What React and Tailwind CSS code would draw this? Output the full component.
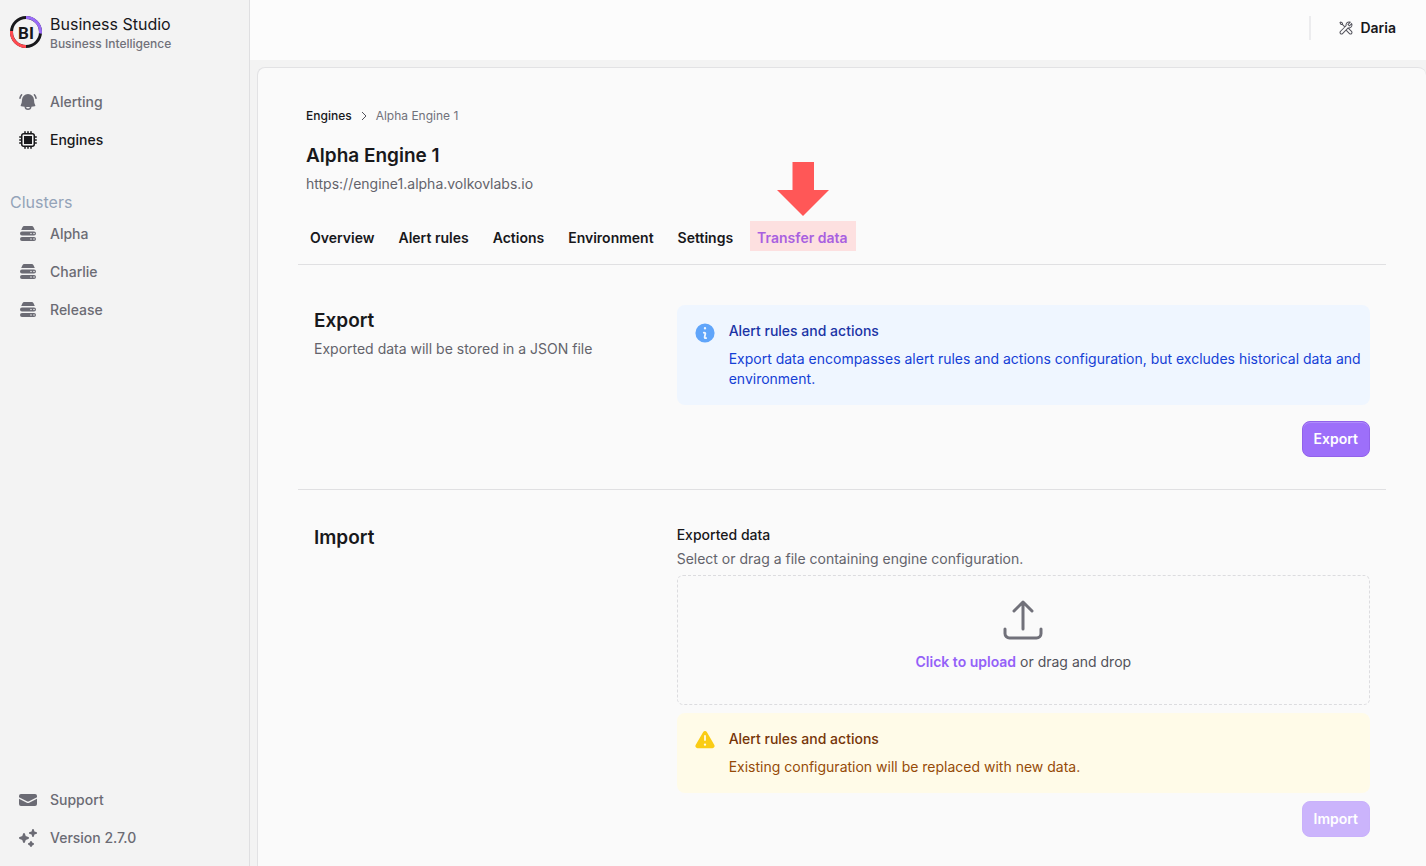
import { useState } from "react";
import {
  HiMiniBellAlert,
  HiMiniCpuChip,
  HiMiniServerStack,
  HiMiniEnvelope,
  HiMiniSparkles,
  HiMiniInformationCircle,
  HiMiniExclamationTriangle,
  HiOutlineArrowUpTray,
} from "react-icons/hi2";
import { LiaToolsSolid } from "react-icons/lia";

function Logo() {
  return (
    <svg viewBox="0 0 32 32" className="mt-0.5 size-8 shrink-0" fill="none" strokeWidth="3" aria-hidden="true">
      <circle cx="16" cy="16" r="14.5" stroke="#18181b" />
      <path d="M16 1.5A14.5 14.5 0 0 1 30.4 17.5" stroke="#9a6cf8" />
      <path d="M16 30.5A14.5 14.5 0 0 1 1.5 15" stroke="#ff4a50" />
      <text
        x="16"
        y="23"
        textAnchor="middle"
        fill="#18181b"
        fontSize="17"
        fontWeight="700"
        fontFamily="Roboto, sans-serif"
      >
        BI
      </text>
    </svg>
  );
}

function NavItem({ icon: Icon, label, active }) {
  return (
    <li>
      <a
        href="#"
        className={
          "flex h-9 items-center gap-3 px-2 text-sm font-medium " + (active ? "text-[#18181b]" : "text-[#6b6b74]")
        }
      >
        <Icon className="size-5 shrink-0" />
        {label}
      </a>
    </li>
  );
}

function Sidebar() {
  return (
    <aside className="flex w-[250px] shrink-0 flex-col border-r border-[#dfdfe1] bg-[#f3f3f3] p-2.5">
      <a href="#" className="flex items-start gap-2 pt-1">
        <Logo />
        <span className="flex flex-col">
          <span className="text-base leading-5 text-[#18181b]">Business Studio</span>
          <span className="text-xs leading-5 font-medium text-[#71717a]">Business Intelligence</span>
        </span>
      </a>
      <nav className="flex grow flex-col pt-[30px]">
        <ul className="flex flex-col gap-0.5">
          <NavItem icon={HiMiniBellAlert} label="Alerting" />
          <NavItem icon={HiMiniCpuChip} label="Engines" active />
        </ul>
        <h2 className="mt-8 mb-0.5 text-base text-[#94a3b8]">Clusters</h2>
        <ul className="flex flex-col gap-0.5">
          <NavItem icon={HiMiniServerStack} label="Alpha" />
          <NavItem icon={HiMiniServerStack} label="Charlie" />
          <NavItem icon={HiMiniServerStack} label="Release" />
        </ul>
        <ul className="mt-auto flex flex-col gap-0.5">
          <NavItem icon={HiMiniEnvelope} label="Support" />
          <NavItem icon={HiMiniSparkles} label="Version 2.7.0" />
        </ul>
      </nav>
    </aside>
  );
}

function Tabs() {
  const tabs = ["Overview", "Alert rules", "Actions", "Environment", "Settings"];
  return (
    <nav className="flex gap-6 border-b border-[#e0e0e2] px-3 pt-[34px] pb-4 text-sm leading-5 font-semibold text-[#18181b]">
      {tabs.map((tab) => (
        <a key={tab} href="#">
          {tab}
        </a>
      ))}
      <a href="#" aria-current="page" className="relative text-[#a960e0]">
        <span className="absolute -top-[7px] -left-[7px] h-[30px] w-[106px] bg-[#fde0e0]" />
        <svg
          viewBox="0 0 52 54"
          className="absolute bottom-[calc(100%+12px)] left-5 h-[54px] w-[52px]"
          aria-hidden="true"
        >
          <path d="M15.5 0H37V28H52L26 54L0 28H15.5Z" fill="#ff5757" />
        </svg>
        <span className="relative">Transfer data</span>
      </a>
    </nav>
  );
}

function Notice({ icon: Icon, title, children, box, iconColor, titleColor, textColor }) {
  return (
    <div className={"flex gap-3 rounded-lg p-4 pr-2 text-sm leading-5 " + box}>
      <Icon className={"size-6 shrink-0 " + iconColor} />
      <div className="flex flex-col gap-2">
        <h3 className={"font-medium " + titleColor}>{title}</h3>
        <p className={textColor}>{children}</p>
      </div>
    </div>
  );
}

function Button({ children, ...props }) {
  return (
    <button
      type="button"
      className="h-9 self-end rounded-lg border border-[#9162ea] bg-[#9d6ffa] px-[11px] text-sm font-semibold text-white shadow-[inset_0_1px_0_#b08cfc] disabled:border-[#c9b1fb] disabled:bg-[#cbb4fc] disabled:shadow-none"
      {...props}
    >
      {children}
    </button>
  );
}

export default function App() {
  const [file, setFile] = useState(null);
  return (
    <div className="flex min-h-screen bg-[#f3f3f3] font-['Inter',sans-serif] text-[#18181b]">
      <Sidebar />
      <div className="flex min-w-0 grow flex-col">
        <header className="flex h-[60px] items-center justify-end bg-[#fcfcfc] pr-[30px] pb-1">
          <div className="h-6 border-l-2 border-[#ececee]" />
          <button type="button" className="ml-[27px] flex items-center gap-1.5 text-sm font-semibold">
            <LiaToolsSolid className="size-4 text-[#52525b]" />
            Daria
          </button>
        </header>
        <main className="mt-[7px] ml-[7px] grow rounded-t-lg border-t border-l border-[#e2e2e4] bg-[#fafafa] px-10 pt-10 pb-7">
          <div className="px-2">
            <nav aria-label="Breadcrumb" className="flex items-center gap-2 text-xs leading-4">
              <a href="#" className="font-medium">
                Engines
              </a>
              <svg viewBox="0 0 8 10" className="h-2.5 w-2" fill="none" stroke="#52525b" aria-hidden="true">
                <path d="M2 1L6 5L2 9" />
              </svg>
              <span className="text-[#71717a]">Alpha Engine 1</span>
            </nav>
            <h1 className="mt-[18px] text-[19px] leading-7 font-semibold">Alpha Engine 1</h1>
            <p className="mt-1 text-sm leading-5 text-[#63636b]">https://engine1.alpha.volkovlabs.io</p>
          </div>
          <Tabs />
          <section className="grid grid-cols-3 gap-8 border-b border-[#e0e0e2] px-4 pt-10 pb-8">
            <div>
              <h2 className="text-[19px] leading-8 font-semibold">Export</h2>
              <p className="text-sm leading-6 text-[#63636b]">Exported data will be stored in a JSON file</p>
            </div>
            <div className="col-span-2 flex flex-col gap-4">
              <Notice
                icon={HiMiniInformationCircle}
                title="Alert rules and actions"
                box="bg-[#eff6ff]"
                iconColor="text-[#60a5fa]"
                titleColor="text-[#1b34a6]"
                textColor="text-[#1440d6]"
              >
                Export data encompasses alert rules and actions configuration, but excludes historical data and
                environment.
              </Notice>
              <Button>Export</Button>
            </div>
          </section>
          <section className="grid grid-cols-3 gap-8 px-4 pt-8">
            <h2 className="text-[19px] leading-8 font-semibold">Import</h2>
            <div className="col-span-2 flex flex-col gap-2 pt-px">
              <div className="text-sm leading-6">
                <label htmlFor="exported-data" className="block font-medium">
                  Exported data
                </label>
                <p className="text-[#63636b]">Select or drag a file containing engine configuration.</p>
                <label
                  htmlFor="exported-data"
                  className="mt-1 flex cursor-pointer flex-col items-center gap-2 rounded-md border border-dashed border-[#dcdcdf] pt-5 pb-8 leading-5 text-[#52525b]"
                >
                  <HiOutlineArrowUpTray className="size-12 text-[#71717a]" />
                  <span>
                    <span className="font-semibold text-[#9461f8]">Click to upload</span> or drag and drop
                  </span>
                </label>
                <input
                  id="exported-data"
                  type="file"
                  accept="application/json"
                  className="sr-only"
                  onChange={(event) => setFile(event.target.files[0] ?? null)}
                />
              </div>
              <Notice
                icon={HiMiniExclamationTriangle}
                title="Alert rules and actions"
                box="bg-[#fffbe8]"
                iconColor="text-[#facc15]"
                titleColor="text-[#763508]"
                textColor="text-[#964b08]"
              >
                Existing configuration will be replaced with new data.
              </Notice>
              <Button disabled={!file}>Import</Button>
            </div>
          </section>
        </main>
      </div>
    </div>
  );
}
